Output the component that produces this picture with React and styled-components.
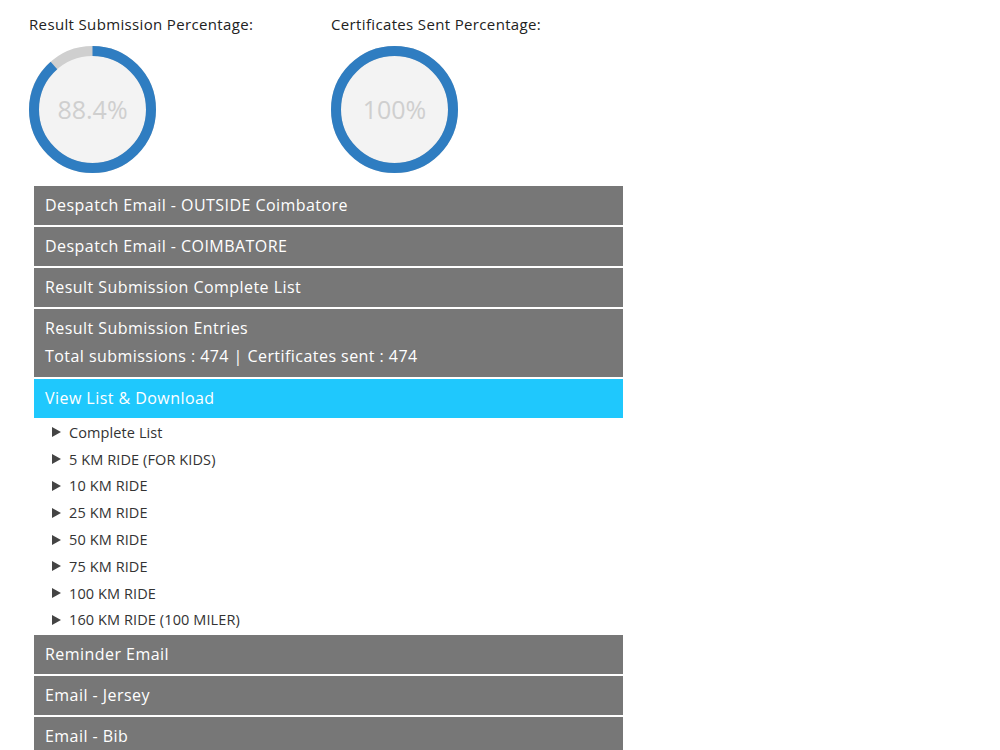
import React from "react";
import styled, { createGlobalStyle } from "styled-components";

const Global = createGlobalStyle`
  html, body { margin: 0; padding: 0; background: #fff; }
  body { font-family: "Open Sans", "Noto Sans", sans-serif; color: #222; }
`;

const Page = styled.div`
  width: 1000px;
  padding: 14px 0 0 0;
`;

const StatsRow = styled.div`
  display: flex;
  padding-left: 29px;
`;

const Stat = styled.div`
  width: 302px;
  display: flex;
  flex-direction: column;
`;

const StatLabel = styled.div`
  font-size: 15px;
  line-height: 20px;
  color: #222;
  letter-spacing: 0.35px;
`;

const Gauge = styled.div`
  position: relative;
  width: 127px;
  height: 127px;
  margin-top: 12px;
`;

const GaugeText = styled.div`
  position: absolute;
  inset: 0;
  display: flex;
  align-items: center;
  justify-content: center;
  font-size: 25px;
  color: #cfcfcf;
  font-weight: 400;
  padding-bottom: 2px;
  box-sizing: border-box;
`;

const Panel = styled.div`
  margin: 13px 0 0 34px;
  width: 589px;
  display: flex;
  flex-direction: column;
`;

const Bar = styled.div`
  background: ${(p) => (p.$active ? "#1fc8fd" : "#777777")};
  color: #fff;
  font-size: 16px;
  letter-spacing: 0.45px;
  padding: ${(p) => (p.$tall ? "5px 11px 7px" : "0 11px 2px")};
  margin-bottom: ${(p) => (p.$active ? "0" : "2px")};
  min-height: 39px;
  box-sizing: border-box;
  display: flex;
  flex-direction: column;
  justify-content: center;
  line-height: 28px;
`;

const List = styled.ul`
  list-style: none;
  margin: 0 0 2px;
  padding: 1px 0 0 18px;
`;

const Item = styled.li`
  display: flex;
  align-items: center;
  height: 26.8px;
  font-size: 14.5px;
  letter-spacing: 0.1px;
  color: #333;
`;

const Arrow = styled.span`
  width: 0;
  height: 0;
  border-top: 5px solid transparent;
  border-bottom: 5px solid transparent;
  border-left: 9px solid #444;
  margin-right: 8px;
`;

function Ring({ pct, label }) {
  const r = 58.5;
  const c = 2 * Math.PI * r;
  return (
    <Gauge>
      <svg width="127" height="127" viewBox="0 0 127 127">
        <circle cx="63.5" cy="63.5" r={r} fill="#f3f3f3" stroke="#cfcfcf" strokeWidth="10" />
        <circle
          cx="63.5"
          cy="63.5"
          r={r}
          fill="none"
          stroke="#2f7dc1"
          strokeWidth="10"
          strokeDasharray={`${(c * pct) / 100} ${c}`}
          transform="rotate(-90 63.5 63.5)"
        />
      </svg>
      <GaugeText>{label}</GaugeText>
    </Gauge>
  );
}

const rides = [
  "Complete List",
  "5 KM RIDE (FOR KIDS)",
  "10 KM RIDE",
  "25 KM RIDE",
  "50 KM RIDE",
  "75 KM RIDE",
  "100 KM RIDE",
  "160 KM RIDE (100 MILER)",
];

export default function App() {
  return (
    <Page>
      <Global />
      <StatsRow>
        <Stat>
          <StatLabel>Result Submission Percentage:</StatLabel>
          <Ring pct={88.4} label="88.4%" />
        </Stat>
        <Stat>
          <StatLabel>Certificates Sent Percentage:</StatLabel>
          <Ring pct={100} label="100%" />
        </Stat>
      </StatsRow>
      <Panel>
        <Bar>Despatch Email - OUTSIDE Coimbatore</Bar>
        <Bar>Despatch Email - COIMBATORE</Bar>
        <Bar>Result Submission Complete List</Bar>
        <Bar $tall>
          <div>Result Submission Entries</div>
          <div>Total submissions : 474 | Certificates sent : 474</div>
        </Bar>
        <Bar $active>View List &amp; Download</Bar>
        <List>
          {rides.map((r) => (
            <Item key={r}>
              <Arrow />
              {r}
            </Item>
          ))}
        </List>
        <Bar>Reminder Email</Bar>
        <Bar>Email - Jersey</Bar>
        <Bar>Email - Bib</Bar>
      </Panel>
    </Page>
  );
}
